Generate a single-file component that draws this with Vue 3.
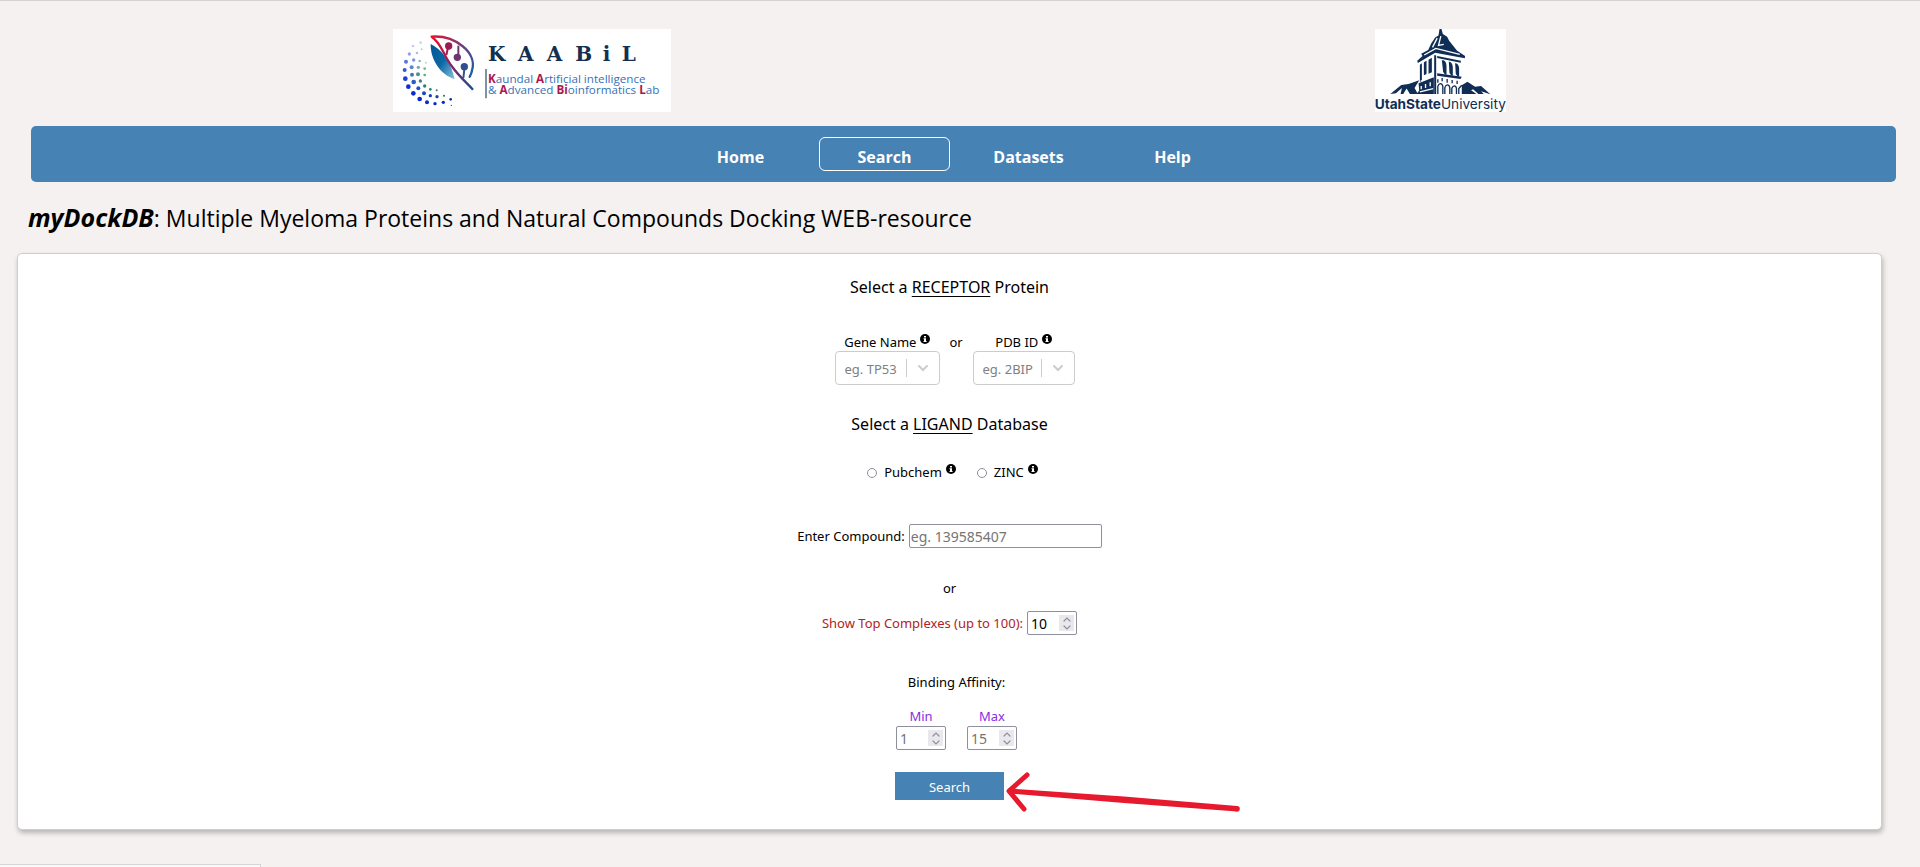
<script setup>
import { ref } from 'vue'

const navItems = ['Home', 'Search', 'Datasets', 'Help']
const activeItem = ref('Search')

const receptorFields = [
  { id: 'gene', label: 'Gene Name', placeholder: 'eg. TP53' },
  { id: 'pdb', label: 'PDB ID', placeholder: 'eg. 2BIP' },
]
const ligands = ['Pubchem', 'ZINC']
const ligand = ref('')
const compound = ref('')
const top = ref(10)
const range = ref({ min: '', max: '' })
const affinity = [
  { key: 'min', label: 'Min', placeholder: '1' },
  { key: 'max', label: 'Max', placeholder: '15' },
]

function stepTop(delta) {
  top.value = Math.min(100, Math.max(1, Number(top.value) + delta))
}
function stepRange(item, delta) {
  range.value[item.key] = Number(range.value[item.key] || item.placeholder) + delta
}

const dots = [
  [122, 68, 4, '#ccd3f6'], [99, 78, 4, '#c3ccf5'], [125, 88, 3, '#b9c8e8'],
  [88, 102, 5, '#8fa2ea'], [111, 99, 4, '#a9bbe6'], [101, 120, 5, '#7b94dd'],
  [78, 125, 6, '#5874e4'], [119, 123, 4, '#93b4cc'], [138, 128, 3, '#b4dcc4'],
  [74, 150, 6, '#3557dd'], [95, 142, 6, '#5f86c8'], [115, 142, 5, '#79a8ae'],
  [134, 146, 4, '#6dbf83'], [76, 176, 7, '#1b3ed8'], [96, 164, 6, '#4377bb'],
  [114, 163, 6, '#508f9d'], [134, 165, 4, '#55b276'], [85, 200, 7, '#0e2fd6'],
  [101, 186, 7, '#2b5dc4'], [121, 183, 5, '#3a7f8e'], [100, 220, 7, '#0c2bd2'],
  [115, 205, 6, '#2054c4'], [134, 198, 5, '#2d7e7b'], [119, 237, 7, '#0a28d0'],
  [132, 220, 6, '#164ac4'], [151, 208, 4, '#2a7f5e'], [141, 247, 6, '#0a28cc'],
  [151, 227, 5, '#123fc4'], [170, 211, 3, '#2a8558'], [165, 251, 5, '#0a28c8'],
  [171, 230, 5, '#1a4798'], [192, 227, 3, '#2c7161'], [190, 247, 5, '#0b2abb'],
  [212, 238, 4, '#1430a8'], [214, 256, 2, '#30485a'],
]
</script>

<template>
  <div class="page">
    <header class="logos">
      <svg class="logo-lab" viewBox="39 27 834 249" role="img" aria-label="KAABiL">
        <defs>
          <linearGradient id="leaf" x1="0" y1="0" x2="1" y2="1">
            <stop offset="0" stop-color="#005596" /><stop offset="0.5" stop-color="#0b67a5" /><stop offset="1" stop-color="#8cc4de" />
          </linearGradient>
          <linearGradient id="rim" gradientUnits="userSpaceOnUse" x1="155" y1="50" x2="275" y2="170">
            <stop offset="0" stop-color="#e8102e" /><stop offset="0.5" stop-color="#6c3d7c" /><stop offset="1" stop-color="#1262a4" />
          </linearGradient>
          <linearGradient id="stem" gradientUnits="userSpaceOnUse" x1="155" y1="50" x2="280" y2="210">
            <stop offset="0" stop-color="#e8102e" /><stop offset="0.5" stop-color="#8a2562" /><stop offset="1" stop-color="#12508f" />
          </linearGradient>
        </defs>
        <rect x="39" y="27" width="834" height="249" fill="#fff" />
        <circle v-for="(d, i) in dots" :key="i" :cx="d[0]" :cy="d[1]" :r="d[2]" :fill="d[3]" />
        <path d="M152 72C183 86 213 125 224 178C181 164 151 119 152 72Z" fill="url(#leaf)" />
        <path d="M155 50C225 45 293 98 276 151C275 160 271 166 269 170" fill="none" stroke="url(#rim)" stroke-width="7" stroke-linecap="round" />
        <path d="M155 50C187 72 187 102 215 138C235 167 258 186 279 209" fill="none" stroke="url(#stem)" stroke-width="7" />
        <g fill="none" stroke-width="6">
          <path d="M205 78L199 105" stroke="#9b1d50" />
          <path d="M235 77V112" stroke="#74366f" />
          <path d="M254 140L250 174" stroke="#31538f" />
        </g>
        <circle cx="206" cy="78" r="11" fill="#9d1a50" />
        <circle cx="232" cy="112" r="11" fill="#6e3472" />
        <circle cx="253" cy="140" r="11" fill="#30508c" />
        <text class="lab-name" x="324 414 500 586 668 725" y="123">KAABiL</text>
        <path d="M318 147V235" stroke="#3c5d7c" stroke-width="4" />
        <text class="lab-text" x="324" y="188"><tspan class="hot">K</tspan>aundal <tspan class="hot">A</tspan>rtificial intelligence</text>
        <text class="lab-text" x="324" y="223">&amp; <tspan class="hot">A</tspan>dvanced <tspan class="hot">Bi</tspan>oinformatics <tspan class="hot">L</tspan>ab</text>
      </svg>
      <svg class="logo-usu" viewBox="45 27 394 249" role="img" aria-label="Utah State University">
        <rect x="45" y="27" width="394" height="249" fill="#fff" />
        <g fill="#0f2d55">
          <path d="M239 27H245L249 42L262 50L268 62L292 92L316 108L315 115L226 98L174 129L172 122L188 108L184 101L205 90L214 70L226 52L236 46Z" />
          <path d="M180 134L186 130V184L180 187ZM192 127L200 122V162L192 166ZM206 119L216 113V157L206 161ZM223 106H229V222H223Z" />
          <path d="M232 108L303 122V128L232 114Z" />
          <path d="M246 121C255 119 260 128 260 138V164H256L250 156ZM267 125C275 125 279 133 279 142V167H275L269 159ZM286 130C294 130 298 138 298 146V170H294L288 162Z" />
          <path d="M176 190L222 172V222H170L178 212ZM232 160L306 170L302 177L232 167Z" />
          <path d="M91 222L124 195L146 192L178 181L164 204L174 222H150L140 206L130 222H122L126 204L108 220Z" />
          <path d="M306 196L323 185L346 200L364 198L392 223L364 214L372 222H356L340 208L334 211L350 222H306Z" />
        </g>
        <g fill="none" stroke="#0f2d55" stroke-width="4">
          <path d="M234 222V199C238 188 246 188 249 199V222M255 222V203C259 192 267 192 270 203V222M276 222V205C280 195 288 195 290 205V222M297 222V206L306 196" />
          <path d="M234 178V188M247 174V184M262 177V188M277 180V190M292 182V192" />
        </g>
        <g fill="none" stroke="#fff" stroke-width="4">
          <path d="M243 48L236 76L252 73M232 54L218 82M193 105L228 85L300 103" />
          <path d="M184 198V208M197 192V204M211 187V199M182 184L220 168M180 216L220 206" />
        </g>
        <text class="usu-text" x="44" y="266"><tspan class="usu-bold">UtahState</tspan>University</text>
      </svg>
    </header>

    <nav class="nav">
      <a v-for="item in navItems" :key="item" href="#" :class="{ active: item === activeItem }" @click.prevent="activeItem = item">{{ item }}</a>
    </nav>

    <h1 class="title"><em>myDockDB</em>: Multiple Myeloma Proteins and Natural Compounds Docking WEB-resource</h1>

    <form class="card" @submit.prevent>
      <h2>Select a <u>RECEPTOR</u> Protein</h2>
      <div class="receptors">
        <template v-for="(f, i) in receptorFields" :key="f.id">
          <span v-if="i" class="between">or</span>
          <div class="field">
            <label :for="f.id">{{ f.label }}
              <svg class="info" viewBox="0 0 10 10"><circle cx="5" cy="5" r="5" /><path d="M4 2h2v1.400H4zM3.500 4.200H6V7h.6v1H3.500V7H4V5.200h-.5z" fill="#fff" /></svg>
            </label>
            <div class="select" :class="f.id">
              <select :id="f.id"><option>{{ f.placeholder }}</option></select>
              <svg class="chevron" viewBox="0 0 12 8"><path d="M2 2L6 6L10 2" /></svg>
            </div>
          </div>
        </template>
      </div>

      <h2>Select a <u>LIGAND</u> Database</h2>
      <div class="radios">
        <label v-for="name in ligands" :key="name">
          <input v-model="ligand" type="radio" name="ligand" :value="name">
          <span>{{ name }}</span>
          <svg class="info" viewBox="0 0 10 10"><circle cx="5" cy="5" r="5" /><path d="M4 2h2v1.400H4zM3.500 4.200H6V7h.6v1H3.500V7H4V5.200h-.5z" fill="#fff" /></svg>
        </label>
      </div>

      <div class="row compound">
        <label for="compound">Enter Compound:</label>
        <input id="compound" v-model="compound" class="box" type="text" placeholder="eg. 139585407">
      </div>
      <p class="or">or</p>
      <div class="row top">
        <label for="top">Show Top Complexes (up to 100):</label>
        <span class="number">
          <input id="top" v-model="top" class="box" type="number" min="1" max="100">
          <span class="spin">
            <button type="button" aria-label="Increase" @click="stepTop(1)"><svg viewBox="0 0 8 5"><path d="M1 4L4 1L7 4" /></svg></button>
            <button type="button" aria-label="Decrease" @click="stepTop(-1)"><svg viewBox="0 0 8 5"><path d="M1 1L4 4L7 1" /></svg></button>
          </span>
        </span>
      </div>

      <p class="binding">Binding Affinity:</p>
      <div class="affinity">
        <div v-for="a in affinity" :key="a.key" class="limit">
          <label :for="a.key">{{ a.label }}</label>
          <span class="number">
            <input :id="a.key" v-model="range[a.key]" class="box" type="number" :placeholder="a.placeholder">
            <span class="spin">
              <button type="button" aria-label="Increase" @click="stepRange(a, 1)"><svg viewBox="0 0 8 5"><path d="M1 4L4 1L7 4" /></svg></button>
              <button type="button" aria-label="Decrease" @click="stepRange(a, -1)"><svg viewBox="0 0 8 5"><path d="M1 1L4 4L7 1" /></svg></button>
            </span>
          </span>
        </div>
      </div>
      <div class="submit">
        <button class="search" type="submit">Search</button>
        <svg class="arrow" viewBox="0 0 240 44">
          <path class="shaft" d="M6 18.500L120 26.500L233 36V41.500L120 33L6 23.500Z" />
          <path d="M23 5L5 21L20 39" />
          <circle class="shaft" cx="233" cy="38.700" r="2.800" />
        </svg>
      </div>
    </form>
    <div class="status"></div>
  </div>
</template>

<style>
body {
  background: #f5f1f0;
}
</style>

<style scoped>
.page {
  position: relative;
  box-sizing: border-box;
  min-height: 100vh;
  border-top: 1px solid #d4d1d0;
  padding-top: 28px;
  font: 13px/18px "Noto Sans", "Open Sans", sans-serif;
  color: #000;
}
.logos {
  display: grid;
  grid-template-columns: 1064fr 856fr;
  justify-items: center;
  margin-bottom: 14px;
}
.logo-lab {
  width: 278px;
  height: 83px;
}
.logo-usu {
  width: 131px;
  height: 83px;
  margin-right: 103px;
}
.lab-name {
  font: bold 60px "DejaVu Serif", serif;
  fill: #14304f;
}
.lab-text {
  font: 35px "Open Sans", sans-serif;
  fill: #3671b5;
}
.hot {
  font-weight: 700;
  fill: #a8174f;
}
.usu-text {
  font: 41px Inter, "Liberation Sans", sans-serif;
  fill: #0f2d55;
}
.usu-bold {
  font-weight: 700;
}
.nav {
  display: flex;
  justify-content: center;
  gap: 13px;
  box-sizing: border-box;
  height: 56px;
  margin: 0 24px 0 31px;
  padding: 11px 14px 11px 0;
  border-radius: 5px;
  background: #4682b4;
}
.nav a {
  box-sizing: border-box;
  width: 131px;
  height: 34px;
  border: 1px solid transparent;
  border-radius: 6px;
  padding-top: 4px;
  font: bold 16px/30px "Open Sans", sans-serif;
  text-align: center;
  text-decoration: none;
  color: #fff;
}
.nav a.active {
  border-color: #fff;
}
.title {
  margin: 19px 28px;
  font: 23px/32px "Open Sans", sans-serif;
}
.title em {
  font-size: 25px;
  font-weight: 700;
}
.card {
  display: flex;
  flex-direction: column;
  align-items: center;
  margin: 0 38px 0 17px;
  border: 1px solid #d0cdcd;
  border-radius: 5px;
  padding: 21px 0 29px;
  background: #fff;
  box-shadow: 1px 3px 5px rgba(0, 0, 0, 0.25);
}
.card h2 {
  margin: 0;
  font-size: 16px;
  line-height: 24px;
  font-weight: 400;
}
u {
  text-underline-offset: 3px;
}
.receptors {
  display: flex;
  margin: 34px 0 27px 10px;
}
.between {
  width: 33px;
  text-align: center;
}
.field {
  display: flex;
  flex-direction: column;
  align-items: center;
}
.info {
  width: 10px;
  height: 10px;
  vertical-align: 3px;
}
.select {
  display: grid;
  align-items: center;
}
.select > * {
  grid-area: 1 / 1;
}
.select select {
  appearance: none;
  box-sizing: border-box;
  width: 105px;
  height: 34px;
  border: 1px solid #ccc;
  border-radius: 4px;
  padding: 1px 34px 0 9px;
  background: #fff;
  font: inherit;
  color: #808080;
}
.select.pdb select {
  width: 102px;
}
.chevron {
  justify-self: end;
  width: 12px;
  height: 8px;
  padding: 5px 11px 5px 10px;
  border-left: 1px solid #ccc;
  pointer-events: none;
}
.chevron path {
  fill: none;
  stroke: #ccc;
  stroke-width: 2;
  stroke-linecap: round;
}
.radios {
  display: flex;
  gap: 21px;
  margin: 27px 0 43px 6px;
}
.radios label {
  display: flex;
}
.radios input {
  appearance: none;
  box-sizing: border-box;
  width: 10px;
  height: 10px;
  margin: 5px 7px 0 0;
  border: 1px solid #8f8f9d;
  border-radius: 50%;
}
.radios input:checked {
  border-width: 3px;
}
.radios .info {
  margin: 1px 0 0 4px;
}
.row {
  display: flex;
  align-items: center;
  gap: 4px;
}
.box {
  box-sizing: border-box;
  height: 24px;
  border: 1px solid #8f8f9d;
  border-radius: 2px;
  padding: 1px 1px 0;
  background: #fff;
  font: inherit;
  font-size: 14px;
  color: #000;
}
.box::placeholder {
  color: #757575;
  opacity: 1;
}
.compound .box {
  width: 193px;
}
.or {
  margin: 31px 0 14px;
}
.top {
  color: #b22222;
}
.number {
  display: inline-grid;
  align-items: center;
}
.number > * {
  grid-area: 1 / 1;
}
.number .box {
  width: 50px;
  padding: 1px 20px 0 3px;
  appearance: textfield;
}
.number .box::-webkit-inner-spin-button {
  appearance: none;
}
.spin {
  display: grid;
  justify-self: end;
  width: 15px;
  height: 16px;
  margin-right: 3px;
  background: #e9e9ed;
}
.spin button {
  display: grid;
  place-items: center;
  height: 8px;
  border: 0;
  padding: 0;
  background: none;
}
.spin svg {
  width: 8px;
  height: 5px;
  fill: none;
  stroke: #8f8f9d;
  stroke-width: 1.2;
  stroke-linecap: round;
}
.binding {
  margin: 38px 0 16px 14px;
}
.affinity {
  display: flex;
  gap: 21px;
  margin: 0 0 22px 14px;
}
.limit {
  display: flex;
  flex-direction: column;
  align-items: center;
  gap: 1px;
  color: #8a2be2;
}
.submit {
  position: relative;
}
.search {
  display: block;
  width: 109px;
  height: 28px;
  border: 0;
  padding: 2px 0 0;
  background: #4682b4;
  font: inherit;
  color: #fff;
}
.arrow {
  position: absolute;
  left: 109px;
  top: -2px;
  width: 240px;
  height: 44px;
  fill: none;
  stroke: #e6192d;
  stroke-width: 5;
  stroke-linecap: round;
  stroke-linejoin: round;
  pointer-events: none;
}
.arrow .shaft {
  fill: #e6192d;
  stroke: none;
}
.status {
  position: absolute;
  left: 0;
  bottom: 0;
  width: 260px;
  height: 2px;
  border: solid #d5d5d5;
  border-width: 1px 1px 0 0;
  background: #f9f9f9;
}
</style>
